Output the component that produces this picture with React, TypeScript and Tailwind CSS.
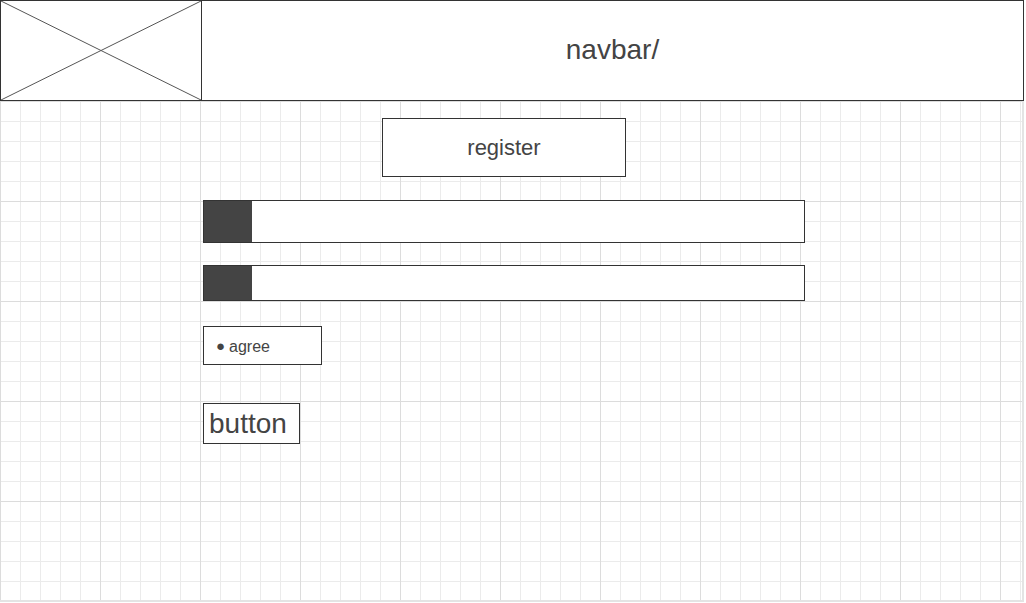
import React from "react";

const gridBg =
  "bg-[linear-gradient(to_right,#dcdcdc_1px,transparent_1px),linear-gradient(to_bottom,#dcdcdc_1px,transparent_1px),linear-gradient(to_right,#ebebeb_1px,transparent_1px),linear-gradient(to_bottom,#ebebeb_1px,transparent_1px)] [background-size:100px_100px,100px_100px,20px_20px,20px_20px] [background-position:0_1px]";

const ImagePlaceholder = () => (
  <div className="w-[202px] h-[101px] border border-[#333] bg-white shrink-0">
    <svg width="200" height="99" viewBox="0 0 200 99" className="block">
      <line x1="0" y1="0" x2="200" y2="99" stroke="#555" strokeWidth="1" />
      <line x1="200" y1="0" x2="0" y2="99" stroke="#555" strokeWidth="1" />
    </svg>
  </div>
);

const TextField = ({ height }: { height: string }) => (
  <div className={`flex w-[602px] border border-[#333] bg-white ${height}`}>
    <div className="w-[48px] bg-[#444]" />
  </div>
);

export default function App() {
  return (
    <div
      className="relative w-[1026px] h-[603px] bg-white overflow-hidden"
      style={{ fontFamily: '"Liberation Sans", Arial, sans-serif' }}
    >
      <div className={`w-[1024px] h-[602px] border-r-2 border-b-2 border-[#e4e4e4] ${gridBg}`}>
        <header className="flex w-[1024px] h-[101px]">
          <ImagePlaceholder />
          <div className="flex-1 flex items-center justify-center border border-l-0 border-[#333] bg-white text-[28px] text-[#444] pb-[2px]">
            navbar/
          </div>
        </header>

        <main className="flex flex-col pl-[203px]">
          <div className="ml-[179px] mt-[17px] w-[244px] h-[59px] border border-[#333] bg-white flex items-center justify-center text-[22px] text-[#444]">
            register
          </div>

          <div className="mt-[23px]">
            <TextField height="h-[43px]" />
          </div>
          <div className="mt-[22px]">
            <TextField height="h-[36px]" />
          </div>

          <div className="mt-[25px] w-[119px] h-[39px] border border-[#333] bg-white flex items-center pl-[12px] pt-[2px] text-[16px] text-[#444]">
            <span className="text-[15px] mr-[4px]">●</span>agree
          </div>

          <div className="mt-[38px] w-[97px] h-[41px] border border-[#333] bg-white flex items-center pl-[5px] text-[28px] text-[#444]">
            button
          </div>
        </main>
      </div>
    </div>
  );
}
